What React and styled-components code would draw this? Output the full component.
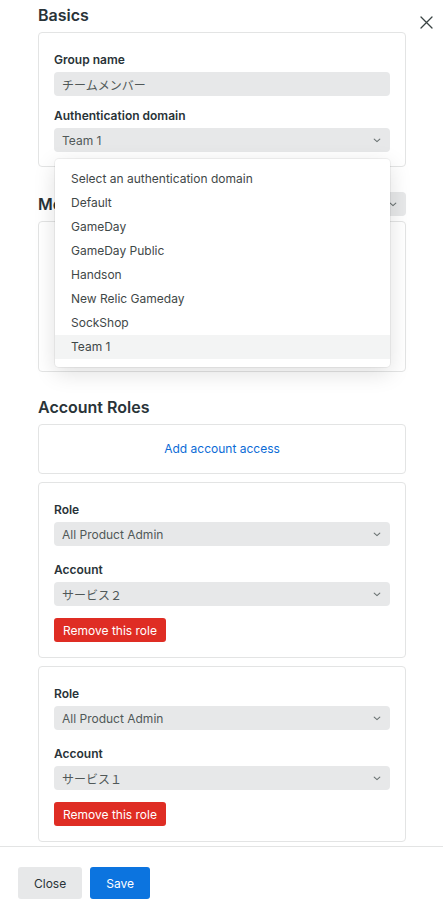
import React from 'react';
import styled, { createGlobalStyle } from 'styled-components';

const GlobalStyle = createGlobalStyle`
  html, body {
    margin: 0;
    padding: 0;
    background: #ffffff;
  }
  body {
    font-family: Inter, "Noto Sans CJK JP", "Liberation Sans", sans-serif;
    font-size: 12px;
    color: #293338;
  }
  * {
    box-sizing: border-box;
  }
`;

const Panel = styled.div`
  position: relative;
  width: 443px;
  height: 912px;
  display: flex;
  flex-direction: column;
  background: #ffffff;
`;

const Body = styled.div`
  flex: 1;
  overflow: hidden;
  padding: 3px 37px 0 38px;
`;

const CloseIcon = styled.button`
  position: absolute;
  top: 14px;
  right: 9px;
  width: 16px;
  height: 16px;
  padding: 0;
  border: 0;
  background: transparent;
  display: flex;
  align-items: center;
  justify-content: center;
  cursor: pointer;
`;

const Section = styled.section`
  margin-top: ${(p) => p.$top || 0}px;
`;

const SectionHeader = styled.div`
  display: flex;
  align-items: center;
  justify-content: space-between;
  height: 24px;
  margin-bottom: ${(p) => p.$gap || 5}px;
`;

const Heading = styled.h2`
  margin: 0;
  font-size: 16px;
  line-height: 24px;
  font-weight: 600;
  color: #293338;
`;

const Card = styled.div`
  border: 1px solid #e3e4e4;
  border-radius: 4px;
  padding: ${(p) => p.$pad || '17px 15px 14px'};
  margin-bottom: ${(p) => p.$mb || 0}px;
  min-height: ${(p) => p.$minH || 0}px;
  text-align: ${(p) => (p.$center ? 'center' : 'left')};
`;

const Field = styled.div`
  margin-top: ${(p) => p.$top || 0}px;
  position: relative;
`;

const Label = styled.div`
  font-size: 12px;
  line-height: 20px;
  font-weight: 600;
  color: #293338;
  margin-bottom: 2px;
`;

const Control = styled.div`
  position: relative;
  display: flex;
  align-items: center;
  justify-content: space-between;
  height: 24px;
  width: ${(p) => (p.$width ? `${p.$width}px` : '100%')};
  padding: 0 9px 0 8px;
  border-radius: 4px;
  background: #e7e8e9;
  font-size: 12px;
  color: #505858;
`;

const Chevron = () => (
  <svg width="8" height="5" viewBox="0 0 8 5" fill="none">
    <path d="M1.2 1.2l2.8 2.4 2.8-2.4" stroke="#6a7272" strokeWidth="1.1" strokeLinecap="round" strokeLinejoin="round" />
  </svg>
);

const Dropdown = styled.ul`
  position: absolute;
  z-index: 5;
  top: calc(100% + 7px);
  left: 1px;
  right: 0;
  margin: 0;
  padding: 8px 0;
  list-style: none;
  background: #ffffff;
  border-radius: 4px;
  box-shadow: 0 0 0 1px rgba(0, 0, 0, 0.05), 0 6px 22px rgba(0, 0, 0, 0.13);
`;

const Option = styled.li`
  height: 24px;
  line-height: 24px;
  padding-left: 16px;
  font-size: 12px;
  color: #3f4848;
  background: ${(p) => (p.$active ? '#f3f4f4' : 'transparent')};
`;

const LinkText = styled.a`
  font-size: 12px;
  line-height: 20px;
  color: #0b6bd6;
  text-decoration: none;
  cursor: pointer;
`;

const Button = styled.button`
  height: ${(p) => (p.$small ? 24 : 32)}px;
  padding: 0 ${(p) => (p.$small ? 9 : 16)}px;
  border: 0;
  border-radius: 3px;
  font-family: inherit;
  font-size: 12px;
  cursor: pointer;
  color: ${(p) => (p.$variant === 'normal' ? '#293338' : '#ffffff')};
  background: ${(p) =>
    p.$variant === 'danger' ? '#df2d24' : p.$variant === 'primary' ? '#0c74df' : '#e7e8e9'};
`;

const Footer = styled.div`
  display: flex;
  gap: 8px;
  height: 66px;
  padding: 20px 18px 0;
  border-top: 1px solid #e3e4e4;
`;

const domains = [
  'Select an authentication domain',
  'Default',
  'GameDay',
  'GameDay Public',
  'Handson',
  'New Relic Gameday',
  'SockShop',
  'Team 1',
];

const roles = [
  { role: 'All Product Admin', account: 'サービス２' },
  { role: 'All Product Admin', account: 'サービス１' },
];

function Select({ value, width, children }) {
  return (
    <Control $width={width}>
      <span>{value}</span>
      <Chevron />
      {children}
    </Control>
  );
}

function RoleCard({ role, account }) {
  return (
    <Card $pad="17px 15px 15px" $mb={8}>
      <Field>
        <Label>Role</Label>
        <Select value={role} />
      </Field>
      <Field $top={14}>
        <Label>Account</Label>
        <Select value={account} />
      </Field>
      <Field $top={12}>
        <Button $small $variant="danger">Remove this role</Button>
      </Field>
    </Card>
  );
}

export default function App() {
  return (
    <Panel>
      <GlobalStyle />
      <CloseIcon aria-label="Close">
        <svg width="13" height="13" viewBox="0 0 13 13" fill="none">
          <path d="M1 1l11 11M12 1L1 12" stroke="#3a4444" strokeWidth="1.3" strokeLinecap="round" />
        </svg>
      </CloseIcon>
      <Body>
        <Section>
          <SectionHeader>
            <Heading>Basics</Heading>
          </SectionHeader>
          <Card>
            <Field>
              <Label>Group name</Label>
              <Control>チームメンバー</Control>
            </Field>
            <Field $top={10}>
              <Label>Authentication domain</Label>
              <Select value="Team 1">
                <Dropdown>
                  {domains.map((d) => (
                    <Option key={d} $active={d === 'Team 1'}>
                      {d}
                    </Option>
                  ))}
                </Dropdown>
              </Select>
            </Field>
          </Card>
        </Section>

        <Section $top={25}>
          <SectionHeader>
            <Heading>Members</Heading>
            <Select value="" width={120} />
          </SectionHeader>
          <Card $minH={151} />
        </Section>

        <Section $top={23}>
          <SectionHeader $gap={5}>
            <Heading>Account Roles</Heading>
          </SectionHeader>
          <Card $pad="14px 15px" $mb={8} $center>
            <LinkText>Add account access</LinkText>
          </Card>
          {roles.map((r, i) => (
            <RoleCard key={i} role={r.role} account={r.account} />
          ))}
        </Section>
      </Body>
      <Footer>
        <Button $variant="normal">Close</Button>
        <Button $variant="primary">Save</Button>
      </Footer>
    </Panel>
  );
}
